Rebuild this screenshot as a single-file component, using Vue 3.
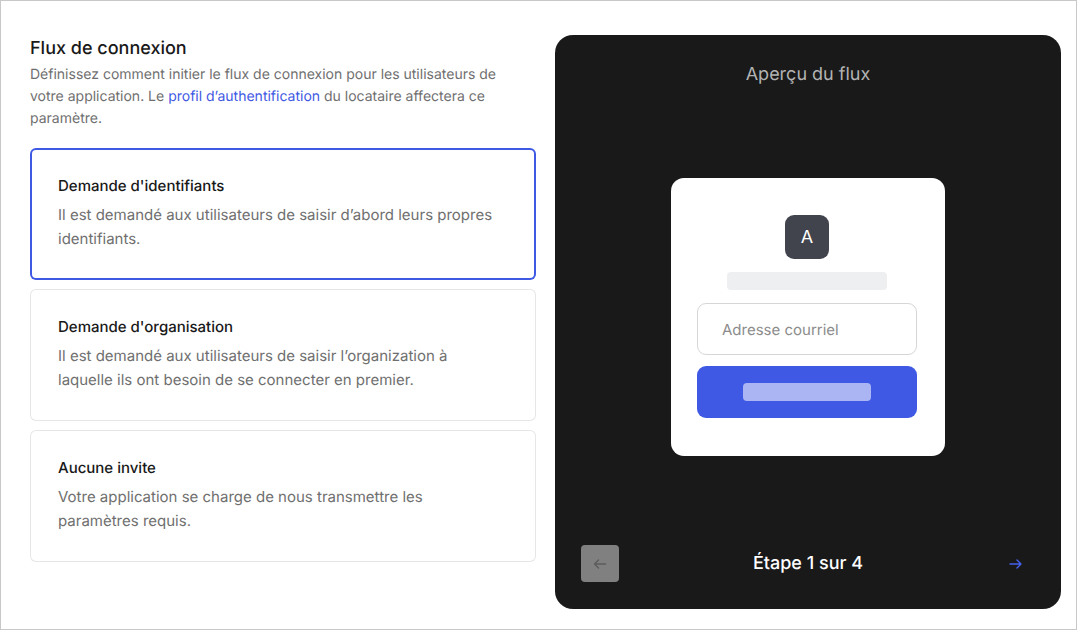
<script setup>
import { ref, computed } from 'vue'

const options = [
  {
    id: 'credentials',
    title: "Demande d'identifiants",
    text: 'Il est demandé aux utilisateurs de saisir d’abord leurs propres identifiants.'
  },
  {
    id: 'organization',
    title: "Demande d'organisation",
    text: 'Il est demandé aux utilisateurs de saisir l’organization à laquelle ils ont besoin de se connecter en premier.'
  },
  {
    id: 'none',
    title: 'Aucune invite',
    text: 'Votre application se charge de nous transmettre les paramètres requis.'
  }
]

const selected = ref('credentials')
const email = ref('')
const step = ref(1)
const total = 4
const isFirst = computed(() => step.value === 1)
const isLast = computed(() => step.value === total)
</script>

<template>
  <main class="page">
    <section class="settings">
      <h1 id="flow-title" class="title">Flux de connexion</h1>
      <p class="intro">
        Définissez comment initier le flux de connexion pour les utilisateurs de votre application. Le
        <a href="#profil">profil d’authentification</a> du locataire affectera ce paramètre.
      </p>
      <div class="options" role="radiogroup" aria-labelledby="flow-title">
        <label
          v-for="option in options"
          :key="option.id"
          class="option"
          :class="{ active: selected === option.id }"
          :for="option.id"
        >
          <input :id="option.id" v-model="selected" class="radio" type="radio" name="flow" :value="option.id" />
          <span class="option-title">{{ option.title }}</span>
          <span class="option-text">{{ option.text }}</span>
        </label>
      </div>
    </section>

    <section class="preview">
      <h2 class="preview-title">Aperçu du flux</h2>
      <div class="login">
        <div class="logo">A</div>
        <div class="skeleton"></div>
        <input v-model="email" class="email" type="email" placeholder="Adresse courriel" aria-label="Adresse courriel" />
        <button class="submit" type="button" aria-label="Continuer"><span class="submit-bar"></span></button>
      </div>
      <footer class="steps">
        <button class="nav prev" type="button" aria-label="Étape précédente" :disabled="isFirst" @click="step--">
          <svg width="14" height="12" viewBox="0 0 14 12" aria-hidden="true">
            <path d="M12.5 6H1.5M5.5 2L1.5 6l4 4" />
          </svg>
        </button>
        <span class="step-label">Étape {{ step }} sur {{ total }}</span>
        <button class="nav next" type="button" aria-label="Étape suivante" :disabled="isLast" @click="step++">
          <svg width="14" height="12" viewBox="0 0 14 12" aria-hidden="true">
            <path d="M1 6h11M8 2l4 4-4 4" />
          </svg>
        </button>
      </footer>
    </section>
  </main>
</template>

<style>
body {
  margin: 0;
  background: #fff;
}
</style>

<style scoped>
.page,
.page * {
  box-sizing: border-box;
}

.page {
  display: grid;
  grid-template-columns: 1fr 1fr;
  gap: 19px;
  min-height: 100vh;
  padding: 34px 15px 20px 29px;
  border: 1px solid #c8c8c8;
  background: #fff;
  color: #191919;
  font-family: Inter, "Liberation Sans", sans-serif;
  text-rendering: geometricPrecision;
}

.title {
  margin: 0;
  font-size: 18px;
  line-height: 28px;
  font-weight: 500;
}

.intro {
  margin: 1px 0 18px;
  padding-right: 24px;
  color: #6f6f6f;
  font-size: 14px;
  line-height: 22px;
}

.intro a {
  color: #3f59e4;
  text-decoration: none;
}

.options {
  display: flex;
  flex-direction: column;
  gap: 9px;
}

.option {
  position: relative;
  display: flex;
  flex-direction: column;
  gap: 5px;
  padding: 26px 30px 29px 28px;
  border-radius: 6px;
  box-shadow: inset 0 0 0 1px #e6e6e6;
  cursor: pointer;
}

.option.active {
  box-shadow: inset 0 0 0 2px #3f59e4;
}

.radio {
  position: absolute;
  width: 1px;
  height: 1px;
  margin: 0;
  opacity: 0;
}

.option-title {
  font-size: 15px;
  line-height: 24px;
  font-weight: 500;
}

.option-text {
  color: #6f6f6f;
  font-size: 15px;
  line-height: 24px;
}

.preview {
  display: flex;
  flex-direction: column;
  align-items: center;
  justify-content: space-between;
  padding: 26px 26px 27px;
  border-radius: 18px;
  background: #191919;
}

.preview-title {
  margin: 0;
  color: #b3b3b3;
  font-size: 18px;
  line-height: 28px;
  font-weight: 400;
}

.login {
  display: flex;
  flex-direction: column;
  align-items: center;
  width: 274px;
  max-width: 100%;
  padding: 37px 28px 38px 26px;
  border-radius: 13px;
  background: #fff;
}

.logo {
  display: grid;
  place-items: center;
  width: 44px;
  height: 44px;
  border-radius: 9px;
  background: #41444c;
  color: #fff;
  font-size: 18px;
}

.skeleton {
  width: 160px;
  height: 18px;
  margin: 13px 0;
  border-radius: 4px;
  background: #eeeff1;
}

.email {
  width: 100%;
  height: 52px;
  margin: 0 0 11px;
  padding: 0 24px;
  border: 1px solid #d6d6d6;
  border-radius: 9px;
  background: #fff;
  color: #191919;
  font: inherit;
  font-size: 15px;
  text-rendering: inherit;
}

.email::placeholder {
  color: #8c8c8c;
  opacity: 1;
}

.submit {
  display: grid;
  place-items: center;
  width: 100%;
  height: 52px;
  padding: 0;
  border: 0;
  border-radius: 9px;
  background: #3f59e4;
}

.submit-bar {
  width: 128px;
  height: 18px;
  border-radius: 4px;
  background: #abb5f3;
}

.steps {
  display: flex;
  align-items: center;
  justify-content: space-between;
  align-self: stretch;
}

.step-label {
  color: #fff;
  font-size: 18px;
  line-height: 26px;
  font-weight: 500;
}

.nav {
  display: grid;
  place-items: center;
  width: 38px;
  height: 37px;
  padding: 0;
  border: 0;
  border-radius: 4px;
  background: transparent;
  color: #4660ee;
}

.nav svg {
  fill: none;
  stroke: currentColor;
  stroke-width: 1.4;
  stroke-linecap: round;
  stroke-linejoin: round;
}

.prev {
  background: #808080;
  color: #5c5c5c;
}
</style>
